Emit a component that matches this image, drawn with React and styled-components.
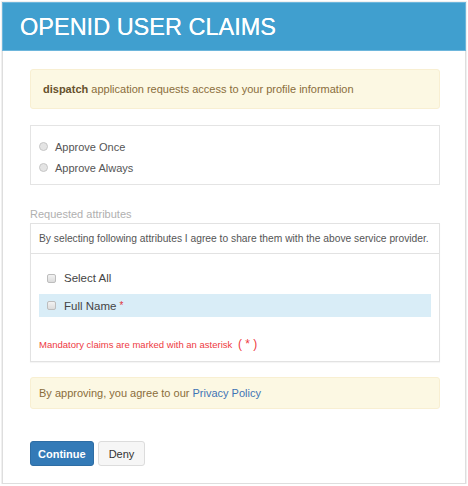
import styled, { createGlobalStyle } from "styled-components";

const Global = createGlobalStyle`
  html, body {
    margin: 0;
    padding: 0;
    background: #ffffff;
    font-family: "Liberation Sans", Arial, sans-serif;
  }
`;

const Frame = styled.div`
  box-sizing: border-box;
  width: 464px;
  height: 482px;
  margin: 2px 0 0 2px;
  border: 1px solid #dedede;
  box-shadow: 0 0 0 1px #f0f0f0;
  background: #fff;
`;

const Header = styled.div`
  box-sizing: border-box;
  height: 49px;
  margin: -1px -1px 0;
  background: #409fcf;
  border: 1px solid #6db6dc;
  display: flex;
  align-items: center;
  padding: 2px 0 0 17px;
  color: #fff;
  font-size: 23.5px;
  text-shadow: 0 0 0.4px #fff;
`;

const Content = styled.div`
  padding: 18px 25px 0 27px;
  display: flex;
  flex-direction: column;
`;

const Alert = styled.div`
  box-sizing: border-box;
  background: #fcf8e3;
  border: 1px solid #f8efd2;
  border-radius: 3px;
  color: #8a6d3b;
  font-size: 11px;
  line-height: 14px;
  padding: ${({ pad }) => pad};
  margin-bottom: ${({ gap }) => gap}px;
`;

const Strong = styled.b`
  color: #66512c;
`;

const Link = styled.a`
  color: #3f74b5;
  text-decoration: none;
`;

const Well = styled.div`
  border: 1px solid #e4e4e4;
  padding: 10px 8px 6px;
  margin-bottom: 22px;
`;

const Choice = styled.label`
  display: flex;
  align-items: center;
  height: 21px;
  font-size: 11px;
  color: #555;
`;

const Radio = styled.span`
  width: 7px;
  height: 7px;
  border-radius: 50%;
  border: 1px solid #c6c6c6;
  background: #e4e4e4;
  margin-right: 7px;
`;

const Label = styled.div`
  font-size: 11px;
  color: #b0b0b0;
  line-height: 14px;
  margin-bottom: 2px;
`;

const Panel = styled.div`
  border: 1px solid #e2e2e2;
  box-shadow: 0 1px 1px rgba(0, 0, 0, 0.04);
  margin-bottom: 15px;
`;

const PanelHead = styled.div`
  height: 29px;
  display: flex;
  align-items: center;
  padding: 0 8px;
  border-bottom: 1px solid #e2e2e2;
  font-size: 10.25px;
  color: #555;
  white-space: nowrap;
`;

const PanelBody = styled.div`
  padding: 12px 8px 9px;
`;

const Row = styled.div`
  display: flex;
  align-items: center;
  height: ${({ h }) => h}px;
  padding-left: 8px;
  margin-bottom: 4px;
  background: ${({ active }) => (active ? "#d9edf7" : "transparent")};
  font-size: 11.5px;
  color: #444;
`;

const Box = styled.span`
  box-sizing: border-box;
  width: 9px;
  height: 9px;
  border: 1px solid #bdbdbd;
  border-radius: 2px;
  background: linear-gradient(#f2f2f2, #dcdcdc);
  margin-right: 8px;
`;

const Star = styled.span`
  color: #e0353b;
  margin-left: 3px;
  font-size: 10px;
`;

const Note = styled.div`
  margin-top: 20px;
  font-size: 9.5px;
  line-height: 14px;
  color: #ee3a3f;
`;

const Paren = styled.span`
  font-size: 12px;
  margin-left: 3px;
`;

const Actions = styled.div`
  display: flex;
  gap: 4px;
  margin-top: 32px;
`;

const Button = styled.button`
  box-sizing: border-box;
  height: 25px;
  padding: 0 ${({ primary }) => (primary ? 7 : 10)}px;
  font-family: "Liberation Sans", Arial, sans-serif;
  font-size: 11px;
  font-weight: ${({ primary }) => (primary ? 700 : 400)};
  color: ${({ primary }) => (primary ? "#fff" : "#333")};
  background: ${({ primary }) => (primary ? "#337ab7" : "#f6f6f6")};
  border: 1px solid ${({ primary }) => (primary ? "#2e6da4" : "#dcdcdc")};
  border-radius: 3px;
`;

export default function App() {
  return (
    <>
      <Global />
      <Frame>
        <Header>OPENID USER CLAIMS</Header>
        <Content>
          <Alert pad="12px" gap={16}>
            <Strong>dispatch</Strong> application requests access to your profile information
          </Alert>
          <Well>
            <Choice>
              <Radio />
              Approve Once
            </Choice>
            <Choice>
              <Radio />
              Approve Always
            </Choice>
          </Well>
          <Label>Requested attributes</Label>
          <Panel>
            <PanelHead>
              By selecting following attributes I agree to share them with the above service provider.
            </PanelHead>
            <PanelBody>
              <Row h={24}>
                <Box />
                Select All
              </Row>
              <Row h={23} active>
                <Box />
                Full Name<Star>*</Star>
              </Row>
              <Note>
                Mandatory claims are marked with an asterisk <Paren>( * )</Paren>
              </Note>
            </PanelBody>
          </Panel>
          <Alert pad="8px 8px" gap={0}>
            By approving, you agree to our <Link href="#">Privacy Policy</Link>
          </Alert>
          <Actions>
            <Button primary>Continue</Button>
            <Button>Deny</Button>
          </Actions>
        </Content>
      </Frame>
    </>
  );
}
